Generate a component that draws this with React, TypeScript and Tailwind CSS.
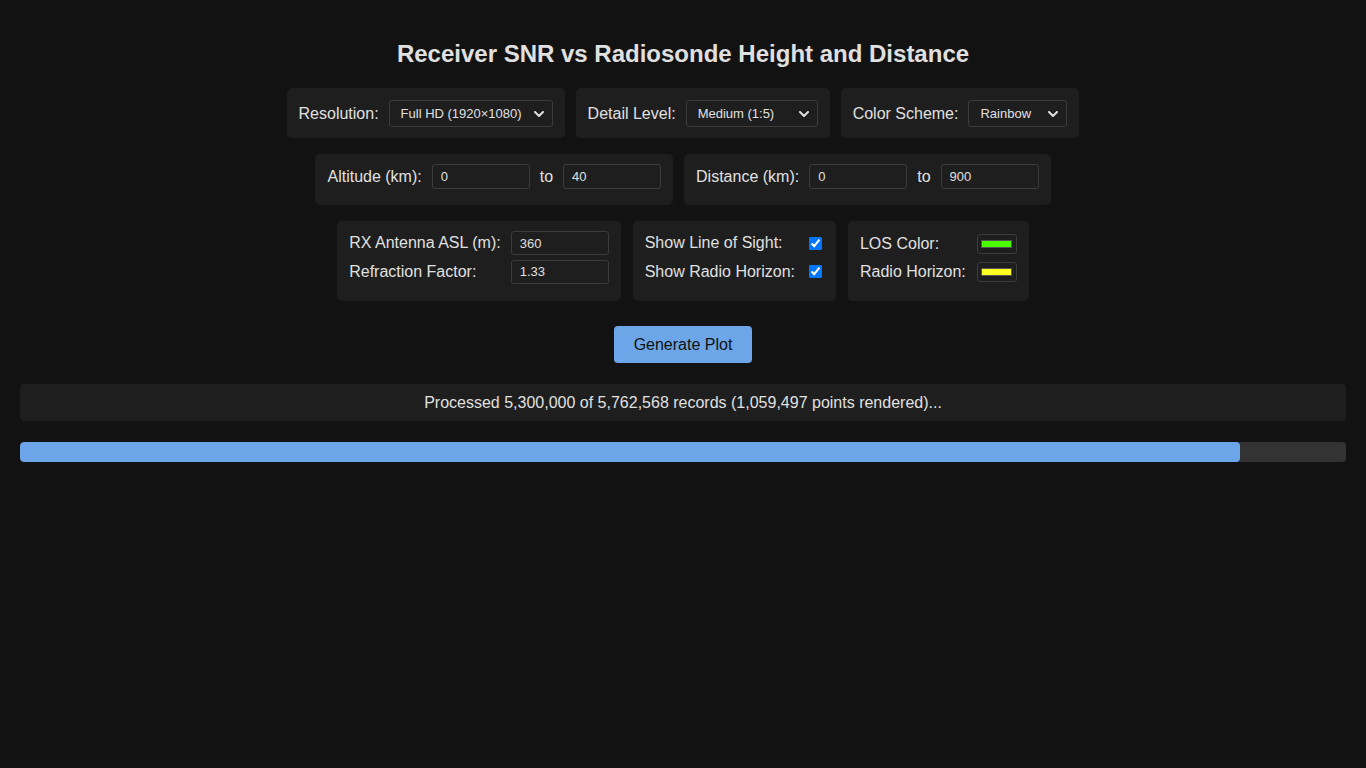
const panel = "bg-[#1e1e1e] rounded-[5px]";
const inputBase =
  "w-[98px] bg-[#1e1e1e] border border-[#3c3c3c] rounded-[3px] px-[8px] text-[13px] text-[#e0e0e0] outline-none";

function Select({ value, width }: { value: string; width: string }) {
  return (
    <div className={`relative ${width} h-[27px]`}>
      <select
        defaultValue={value}
        className="appearance-none w-full h-full bg-[#1e1e1e] border border-[#3c3c3c] rounded-[3px] pl-[11px] pr-6 text-[13px] text-[#e0e0e0] outline-none"
      >
        <option>{value}</option>
      </select>
      <svg
        className="absolute right-[9px] top-[11px] pointer-events-none"
        width="10"
        height="6"
        viewBox="0 0 10 6"
        fill="none"
      >
        <polyline points="1,1 5,5 9,1" stroke="#e0e0e0" strokeWidth="2" strokeLinecap="round" strokeLinejoin="round" />
      </svg>
    </div>
  );
}

function Swatch({ color }: { color: string }) {
  return (
    <div className="w-[40px] h-[20px] border border-[#3c3c3c] rounded-[3px] bg-[#1e1e1e] flex items-center justify-center">
      <div className="w-[31px] h-[8px] border border-[#555]" style={{ background: color }} />
    </div>
  );
}

export default function App() {
  return (
    <div
      className="min-h-screen bg-[#121212] text-[#e0e0e0] px-5 pt-[40px]"
      style={{ fontFamily: '"Liberation Sans", Arial, sans-serif' }}
    >
      <h1 className="text-center text-[24px] leading-[28px] font-bold text-[#e0e0e0] mb-[20px]">
        Receiver SNR vs Radiosonde Height and Distance
      </h1>

      {/* Row 1 */}
      <div className="flex justify-center gap-[11px]">
        <div className={`${panel} flex items-center gap-[10px] px-3 pt-3 pb-[11px]`}>
          <span className="text-[16px]">Resolution:</span>
          <Select value="Full HD (1920×1080)" width="w-[164px]" />
        </div>
        <div className={`${panel} flex items-center gap-[10px] px-3 pt-3 pb-[11px]`}>
          <span className="text-[16px]">Detail Level:</span>
          <Select value="Medium (1:5)" width="w-[132px]" />
        </div>
        <div className={`${panel} flex items-center gap-[10px] px-3 pt-3 pb-[11px]`}>
          <span className="text-[16px]">Color Scheme:</span>
          <Select value="Rainbow" width="w-[99px]" />
        </div>
      </div>

      {/* Row 2 */}
      <div className="flex justify-center gap-[11px] mt-4">
        <div className={`${panel} flex items-center gap-[10px] px-3 pt-[10px] pb-[16px]`}>
          <span className="text-[16px]">Altitude (km):</span>
          <input className={`${inputBase} h-[25px]`} defaultValue="0" />
          <span className="text-[16px]">to</span>
          <input className={`${inputBase} h-[25px]`} defaultValue="40" />
        </div>
        <div className={`${panel} flex items-center gap-[10px] px-3 pt-[10px] pb-[16px]`}>
          <span className="text-[16px]">Distance (km):</span>
          <input className={`${inputBase} h-[25px]`} defaultValue="0" />
          <span className="text-[16px]">to</span>
          <input className={`${inputBase} h-[25px]`} defaultValue="900" />
        </div>
      </div>

      {/* Row 3 */}
      <div className="flex justify-center gap-3 mt-4">
        <div className={`${panel} grid grid-cols-[auto_auto] items-center gap-x-[10px] gap-y-[4px] px-3 pt-[10px] pb-[17px]`}>
          <span className="text-[16px]">RX Antenna ASL (m):</span>
          <input className={`${inputBase} h-[24px]`} defaultValue="360" />
          <span className="text-[16px]">Refraction Factor:</span>
          <input className={`${inputBase} h-[24px]`} defaultValue="1.33" />
        </div>
        <div className={`${panel} grid grid-cols-[auto_auto] items-center gap-x-[14px] gap-y-[4px] pl-3 pr-[14px] pt-[10px] pb-[17px]`}>
          <span className="text-[16px] leading-[24px]">Show Line of Sight:</span>
          <input type="checkbox" defaultChecked className="w-[13px] h-[13px]" />
          <span className="text-[16px] leading-[24px]">Show Radio Horizon:</span>
          <input type="checkbox" defaultChecked className="w-[13px] h-[13px]" />
        </div>
        <div className={`${panel} grid grid-cols-[auto_auto] items-center gap-x-[11px] gap-y-[8px] px-3 pt-[13px] pb-[19px]`}>
          <span className="text-[16px] leading-[20px]">LOS Color:</span>
          <Swatch color="#4cff00" />
          <span className="text-[16px] leading-[20px]">Radio Horizon:</span>
          <Swatch color="#ffff22" />
        </div>
      </div>

      <div className="flex justify-center mt-[25px]">
        <button className="h-[37px] px-5 bg-[#6ca6e8] text-[#111] text-[16px] rounded-[4px]">
          Generate Plot
        </button>
      </div>

      <div className="mt-[21px] h-[37px] bg-[#1e1e1e] rounded-[4px] flex items-center justify-center text-[16px]">
        Processed 5,300,000 of 5,762,568 records (1,059,497 points rendered)...
      </div>

      <div className="mt-[21px] h-5 bg-[#333] rounded-[4px] overflow-hidden">
        <div className="h-full bg-[#6ca6e8] rounded-[4px]" style={{ width: `${(5300000 / 5762568) * 100}%` }} />
      </div>
    </div>
  );
}
